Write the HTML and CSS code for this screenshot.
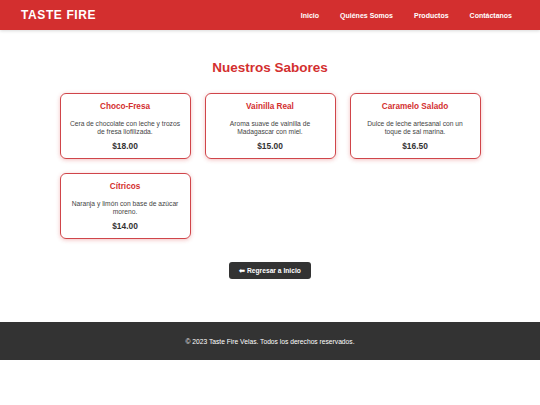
FILE: index.html
```html
<!DOCTYPE html>
<html lang="es">
<head>
<meta charset="utf-8">
<title>Taste Fire - Productos</title>
<link rel="stylesheet" href="styles.css">
</head>
<body>
<header class="site-header">
  <div class="logo">TASTE FIRE</div>
  <nav class="nav">
    <a href="#">Inicio</a>
    <a href="#">Quiénes Somos</a>
    <a href="#">Productos</a>
    <a href="#">Contáctanos</a>
  </nav>
</header>
<main class="main">
  <h2 class="title">Nuestros Sabores</h2>
  <div class="grid">
    <div class="card">
      <h3 class="card-title">Choco-Fresa</h3>
      <p class="card-desc">Cera de chocolate con leche y trozos de fresa liofilizada.</p>
      <p class="card-price">$18.00</p>
    </div>
    <div class="card">
      <h3 class="card-title">Vainilla Real</h3>
      <p class="card-desc">Aroma suave de vainilla de Madagascar con miel.</p>
      <p class="card-price">$15.00</p>
    </div>
    <div class="card">
      <h3 class="card-title">Caramelo Salado</h3>
      <p class="card-desc">Dulce de leche artesanal con un toque de sal marina.</p>
      <p class="card-price">$16.50</p>
    </div>
    <div class="card">
      <h3 class="card-title">Cítricos</h3>
      <p class="card-desc">Naranja y limón con base de azúcar moreno.</p>
      <p class="card-price">$14.00</p>
    </div>
  </div>
  <div class="actions">
    <a class="btn" href="#">⬅ Regresar a Inicio</a>
  </div>
</main>
<footer class="site-footer">
  <p>© 2023 Taste Fire Velas. Todos los derechos reservados.</p>
</footer>
</body>
</html>
```
FILE: styles.css
```css
* { box-sizing: border-box; }
body {
  margin: 0;
  font-family: "Liberation Sans", Arial, sans-serif;
  background: #fff;
  color: #333;
}
.site-header {
  height: 30px;
  background: #d32f2f;
  display: flex;
  align-items: center;
  justify-content: space-between;
  padding: 0 28px 0 21px;
  box-shadow: 0 1px 3px rgba(0,0,0,0.15);
}
.logo {
  color: #fff;
  font-weight: bold;
  font-size: 12px;
  letter-spacing: 0.6px;
}
.nav {
  display: flex;
  gap: 21px;
}
.nav a {
  color: #fff;
  text-decoration: none;
  font-weight: bold;
  font-size: 7px;
}
.main {
  width: 421px;
  margin: 0 auto;
  padding-top: 30px;
  padding-bottom: 43px;
}
.title {
  margin: 0 0 17px;
  text-align: center;
  color: #d32f2f;
  font-size: 13.5px;
  line-height: 16px;
}
.grid {
  display: grid;
  grid-template-columns: repeat(3, 1fr);
  column-gap: 14px;
  row-gap: 14px;
}
.card {
  border: 1px solid #d0454a;
  border-radius: 6px;
  box-shadow: 0 1px 4px rgba(211,47,47,0.3);
  padding: 8px 8px 8px;
  text-align: center;
  height: 66px;
}
.card-title {
  margin: 0;
  color: #d32f2f;
  font-size: 8.2px;
  line-height: 9px;
}
.card-desc {
  margin: 9px 0 0;
  font-size: 6.7px;
  line-height: 7.6px;
  color: #444;
}
.card-price {
  margin: 7px 0 0;
  font-size: 8.4px;
  line-height: 9px;
  font-weight: bold;
  color: #333;
}
.actions {
  display: flex;
  justify-content: center;
  margin-top: 23px;
}
.btn {
  display: inline-block;
  background: #333;
  color: #fff;
  text-decoration: none;
  font-weight: bold;
  font-size: 6.7px;
  line-height: 7px;
  padding: 5px 10px;
  border-radius: 3px;
  width: 82px;
  text-align: center;
  white-space: nowrap;
}
.site-footer {
  background: #333;
  color: #fff;
  height: 38px;
  display: flex;
  align-items: center;
  justify-content: center;
}
.site-footer p {
  margin: 0;
  font-size: 6.7px;
}
```
